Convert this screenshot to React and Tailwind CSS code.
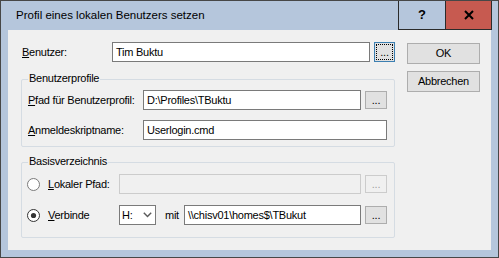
import React from "react";

function Input({ w, value, disabled }) {
  return (
    <div
      className={
        "h-[20px] flex items-center pl-[3px] border " +
        (disabled ? "border-[#cccccc] bg-[#f0f0f0]" : "border-[#7a7a7a] bg-white")
      }
      style={{ width: w }}
    >
      {value}
    </div>
  );
}

function Dots({ disabled, h = 18, w = 22 }) {
  return (
    <div
      className={
        "ml-[4px] flex items-center justify-center border " +
        (disabled
          ? "border-[#cccccc] bg-[#f0f0f0] text-[#a0a0a0]"
          : "border-[#adadad] bg-[#e1e1e1] text-black")
      }
      style={{ width: w, height: h }}
    >
      ...
    </div>
  );
}

function Radio({ checked }) {
  return (
    <svg width="13" height="13" viewBox="0 0 13 13" className="shrink-0">
      <circle
        cx="6.5"
        cy="6.5"
        r="6"
        fill="white"
        stroke={checked ? "#333333" : "#7a7a7a"}
        strokeWidth="1"
      />
      {checked && <circle cx="6.5" cy="6.5" r="2.6" fill="#333333" />}
    </svg>
  );
}

function Group({ label, className, children }) {
  return (
    <div className={"relative border border-[#d5dce3] rounded-[2px] flex flex-col " + className}>
      <span className="absolute left-[6px] top-[-8px] px-[1px] bg-[#f0f0f0]">{label}</span>
      {children}
    </div>
  );
}

export default function App() {
  return (
    <div className="w-[499px] h-[258px] border border-[#474747] bg-[#b5c6dc] flex flex-col font-['Liberation_Sans',Arial,sans-serif] text-black">
      <div className="h-[29px] flex items-start shrink-0">
        <div className="flex-1 h-full flex items-center pl-[15px] text-[11.5px]">
          Profil eines lokalen Benutzers setzen
        </div>
        <div className="mr-[6px] flex h-[29px] border-l border-r border-b border-[#2b2b2b]">
          <div className="w-[47px] border-r border-[#2b2b2b] flex items-center justify-center font-bold text-[13px]">
            ?
          </div>
          <div className="w-[45px] bg-[#c75a50] flex items-center justify-center">
            <svg width="10" height="10" viewBox="0 0 10 10">
              <path d="M1 1 L9 9 M9 1 L1 9" stroke="black" strokeWidth="2" />
            </svg>
          </div>
        </div>
      </div>
      <div className="mx-[7px] h-[220px] bg-[#f0f0f0] flex items-start text-[11px] tracking-[-0.25px] leading-[13px]">
        <div className="ml-[13px] mt-[12px] w-[374px] flex flex-col">
          <div className="flex items-center h-[20px]">
            <span className="ml-[1px] w-[90px]">
              <u className="underline decoration-1 underline-offset-1">B</u>enutzer:
            </span>
            <Input w={258} value="Tim Buktu" />
            <div className="ml-[4px] w-[21px] h-[20px] border border-[#3c7fb1] bg-[#e1e1e1] p-[1px] flex">
              <div className="flex-1 border border-dotted border-black flex items-center justify-center">
                ...
              </div>
            </div>
          </div>

          <Group label="Benutzerprofile" className="mt-[17px] h-[68px] pt-[10px] gap-[10px]">
            <div className="flex items-center h-[20px]">
              <span className="ml-[6px] w-[115px]">
                <u className="underline decoration-1 underline-offset-1">P</u>fad für Benutzerprofil:
              </span>
              <Input w={218} value="D:\Profiles\TBuktu" />
              <Dots />
            </div>
            <div className="flex items-center h-[20px]">
              <span className="ml-[6px] w-[115px]">
                <u className="underline decoration-1 underline-offset-1">A</u>nmeldeskriptname:
              </span>
              <Input w={244} value="Userlogin.cmd" />
            </div>
          </Group>

          <Group label="Basisverzeichnis" className="mt-[15px] h-[76px] pt-[11px] gap-[11px]">
            <div className="flex items-center h-[20px]">
              <div className="ml-[5px]">
                <Radio />
              </div>
              <span className="ml-[8px] w-[71px]">
                <u className="underline decoration-1 underline-offset-1">L</u>okaler Pfad:
              </span>
              <Input w={242} value="" disabled />
              <Dots disabled />
            </div>
            <div className="flex items-center h-[20px]">
              <div className="ml-[5px]">
                <Radio checked />
              </div>
              <span className="ml-[8px] w-[71px]">
                <u className="underline decoration-1 underline-offset-1">V</u>erbinde
              </span>
              <div className="w-[37px] h-[20px] border border-[#7a7a7a] bg-white flex items-center justify-between pl-[2px] pr-[3px]">
                <span>H:</span>
                <svg width="9" height="6" viewBox="0 0 9 6">
                  <path d="M0.8 0.8 L4.5 4.6 L8.2 0.8" fill="none" stroke="#5a5a5a" strokeWidth="1.4" />
                </svg>
              </div>
              <span className="ml-[9px] w-[19px]">mit</span>
              <Input w={177} value="\\chisv01\homes$\TBukut" />
              <Dots />
            </div>
          </Group>
        </div>

        <div className="ml-[12px] mt-[13px] flex flex-col gap-[7px]">
          <div className="w-[73px] h-[21px] border border-[#adadad] bg-[#e1e1e1] flex items-center justify-center">
            OK
          </div>
          <div className="w-[73px] h-[21px] border border-[#adadad] bg-[#e1e1e1] flex items-center justify-center">
            Abbrechen
          </div>
        </div>
      </div>
    </div>
  );
}
